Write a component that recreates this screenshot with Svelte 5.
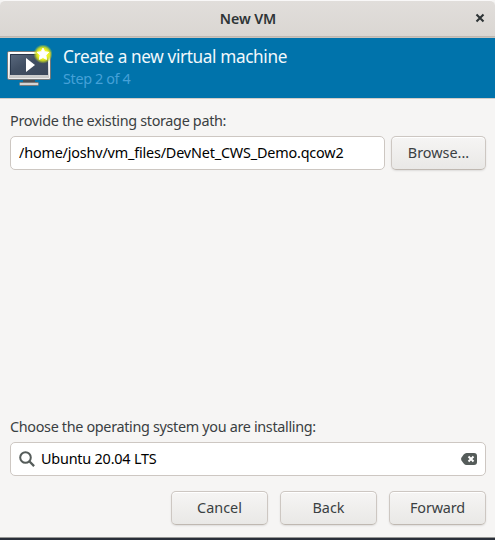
<script>
  let path = $state('/home/joshv/vm_files/DevNet_CWS_Demo.qcow2');
  let system = $state('Ubuntu 20.04 LTS');
</script>

<div class="window">
  <header class="titlebar">
    <span class="title">New VM</span>
    <button class="close" aria-label="Close">
      <svg width="10" height="10" viewBox="0 0 10 10"><path d="M1.5 1.5 8.5 8.5M8.5 1.5 1.5 8.5" stroke="#2e3436" stroke-width="2.1" /></svg>
    </button>
  </header>

  <section class="banner">
    <svg class="vm" width="48" height="48" viewBox="0 0 48 48">
      <defs>
        <linearGradient id="frame" x2="0" y2="1"><stop stop-color="#fff" /><stop offset="1" stop-color="#c4c4c4" /></linearGradient>
        <linearGradient id="screen" x2="1" y2="1"><stop stop-color="#5a697e" /><stop offset=".45" stop-color="#414f63" /><stop offset="1" stop-color="#3b475a" /></linearGradient>
        <radialGradient id="glow"><stop offset=".5" stop-color="#f2f71c" /><stop offset=".72" stop-color="#d2e020" stop-opacity=".85" /><stop offset="1" stop-color="#a8c830" stop-opacity="0" /></radialGradient>
      </defs>
      <path d="M19 34h12v4H19z" fill="#485058" />
      <rect x="15.5" y="37.5" width="19" height="3" rx="1" fill="#d4d4d4" stroke="#777a7b" />
      <rect x="3.5" y="6.5" width="43" height="28" rx="1.5" fill="url(#frame)" stroke="#77797a" />
      <rect x="4.5" y="7.5" width="41" height="26" rx=".5" fill="none" stroke="#fff" stroke-opacity=".7" />
      <rect x="6" y="9" width="38" height="21" fill="url(#screen)" />
      <path d="M6.5 29.5v-20h37" fill="none" stroke="#29374b" />
      <path d="M22 13v14l9-7z" fill="#fff" />
      <circle cx="39" cy="9" r="9.7" fill="url(#glow)" />
      <path d="m39 3.1 1.7 3.6 4.1.6-2.9 2.9.6 4.2-3.5-1.9-3.6 1.9.7-4.2-3-2.9 4.1-.6z" fill="#fff" stroke="#fff" stroke-width="1" stroke-linejoin="round" />
    </svg>
    <div class="heading">
      <h1>Create a new virtual machine</h1>
      <p>Step 2 of 4</p>
    </div>
  </section>

  <main>
    <label class="lab-path" for="path"><span>Provide the existing storage path:</span></label>
    <div class="row">
      <div class="field"><input id="path" class="path" bind:value={path} spellcheck="false" /></div>
      <button class="btn browse">Browse...</button>
    </div>
    <div class="grow"></div>
    <label class="lab-os" for="os"><span>Choose the operating system you are installing:</span></label>
    <div class="field search">
      <svg width="16" height="16" viewBox="0 0 16 16"><circle cx="6.5" cy="6.5" r="5.3" fill="none" stroke="#555c5a" stroke-width="2" /><path d="m10.3 10.3 4.8 4.8" stroke="#555c5a" stroke-width="2.3" /></svg>
      <input id="os" class="os" bind:value={system} />
      <svg width="16" height="12" viewBox="0 0 16 12"><path d="M5.5 0H13q3 0 3 3v6q0 3-3 3H5.5Q4 12 2.7 10.5L.5 7.5Q-.3 6 .5 4.5L2.7 1.5Q4 0 5.5 0z" fill="#555c5a" /><path d="m7.5 3.5 5 5m0-5-5 5" stroke="#fff" stroke-width="2" /></svg>
    </div>
    <div class="actions">
      <button class="btn cancel">Cancel</button>
      <button class="btn back">Back</button>
      <button class="btn forward">Forward</button>
    </div>
  </main>
</div>

<style>
  :global(body) { margin: 0; background: #292e39; overflow: hidden; }
  * { box-sizing: border-box; }
  .window {
    width: 495px; height: 538px; display: flex; flex-direction: column;
    background: #f6f5f4; border-bottom: 1px solid #969694;
    box-shadow: 0 1px 0 #5c6065;
    font: 14.4px/20px "Noto Sans", sans-serif; color: #3a4042;
  }
  button, input { font: inherit; color: inherit; margin: 0; }
  .titlebar {
    height: 38px; flex: none; display: flex; align-items: center; position: relative;
    background: linear-gradient(#e1dedb, #dad6d2);
    border-top: 1px solid #f9f8f8; border-bottom: 1px solid #c9c2bb;
    box-shadow: inset 0 -1px #bfb8b1; border-radius: 5px 5px 0 0;
  }
  .title { flex: 1; text-align: center; font-weight: 600; font-size: 14.2px; letter-spacing: -.1px; padding-left: 1px; color: #2e3436; }
  .close { position: absolute; right: 10px; top: 12px; width: 10px; height: 10px; padding: 0; border: 0; background: none; display: flex; }
  .banner {
    height: 61px; flex: none; display: flex; padding: 7px 0 0 4px;
    background: #0073ab; border-bottom: 1px solid #d1ccc7;
  }
  .heading { padding-left: 11px; }
  h1 { margin: 0; font-size: 17.2px; line-height: 23px; font-weight: 400; letter-spacing: -.37px; color: #f2f8fb; white-space: nowrap; }
  p { margin: 0; font-size: 14.4px; line-height: 22px; letter-spacing: -.36px; color: #45a1d8; white-space: nowrap; }
  main { flex: 1; display: flex; flex-direction: column; padding: 12px 9px 12px 10px; }
  label { height: 20px; margin-bottom: 5px; white-space: nowrap; }
  .lab-path { letter-spacing: -.32px; }
  .lab-os { letter-spacing: -.33px; }
  .row { display: flex; gap: 6px; }
  .field {
    height: 34px; flex: 1; min-width: 0; display: flex; align-items: center; padding: 0 8px;
    background: #fff; border: 1px solid #cdc7c2; border-radius: 5px; color: #000;
  }
  .field input { border: 0; outline: 0; background: none; padding: 0 0 2px; width: 100%; min-width: 0; height: 22px; }
  .path { letter-spacing: -.18px; }
  .os { letter-spacing: -.2px; }
  .search { flex: none; gap: 6px; }
  .search svg { flex: none; }
  .btn {
    height: 34px; padding: 0; border: 1px solid #cdc7c2; border-bottom-color: #bfb8b1; border-radius: 5px;
    background: linear-gradient(#f6f5f4, #e9e8e6); box-shadow: inset 0 1px #fff, 0 1px 2px #0000001a;
  }
  .browse { width: 95px; flex: none; }
  .forward { letter-spacing: -.15px; }
  .grow { flex: 1; }
  .actions { display: flex; justify-content: flex-end; gap: 12px; margin-top: 15px; }
  .actions .btn { width: 97px; }
</style>
